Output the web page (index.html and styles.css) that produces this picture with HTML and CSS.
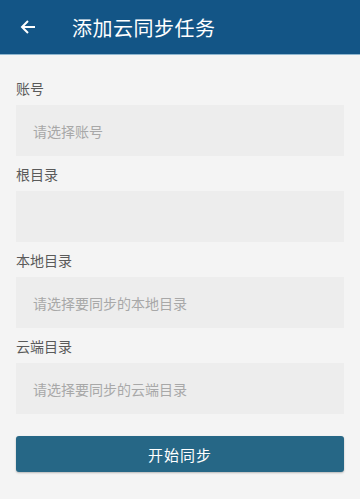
FILE: index.html
```html
<!DOCTYPE html>
<html lang="zh-CN">
<head>
    <meta charset="UTF-8">
    <meta name="viewport" content="width=device-width, initial-scale=1.0">
    <title>添加云同步任务</title>
    <link rel="stylesheet" href="styles.css">
</head>
<body>
    <div class="toolbar">
        <button class="back-btn">
            <svg width="16" height="16" viewBox="0 0 16 16">
                <path d="M15 8H2M8 2L2 8l6 6" fill="none" stroke="#fff" stroke-width="2"/>
            </svg>
        </button>
        <h1>添加云同步任务</h1>
    </div>

    <div class="form">
        <div class="field">
            <div class="label">账号</div>
            <div class="input">请选择账号</div>
        </div>
        <div class="field">
            <div class="label">根目录</div>
            <div class="input"></div>
        </div>
        <div class="field">
            <div class="label">本地目录</div>
            <div class="input">请选择要同步的本地目录</div>
        </div>
        <div class="field">
            <div class="label">云端目录</div>
            <div class="input">请选择要同步的云端目录</div>
        </div>

        <button class="btn">开始同步</button>
    </div>
</body>
</html>
```

FILE: styles.css
```css
* {
    margin: 0;
    padding: 0;
    box-sizing: border-box;
}

body {
    font-family: Roboto, "Noto Sans CJK SC", sans-serif;
    background-color: #f4f4f4;
    color: #555;
    width: 360px;
    height: 499px;
    overflow: hidden;
}

.toolbar {
    height: 55px;
    background-color: #135586;
    border-bottom: 1px solid #8fb6cf;
    display: flex;
    align-items: center;
    padding-left: 20px;
}

.back-btn {
    background: none;
    border: none;
    width: 16px;
    height: 16px;
    display: flex;
}

.toolbar h1 {
    color: #fff;
    font-size: 20px;
    font-weight: normal;
    margin-left: 36px;
    letter-spacing: 0.5px;
}

.form {
    padding: 24px 16px 0;
}

.field {
    margin-bottom: 9px;
}

.label {
    font-size: 14px;
    line-height: 20px;
    color: #5a5a5a;
    margin-bottom: 6px;
}

.input {
    height: 51px;
    background-color: #ededed;
    font-size: 14px;
    color: #a8a8a8;
    padding-left: 17px;
    display: flex;
    align-items: center;
}

.btn {
    display: block;
    width: 100%;
    height: 36px;
    margin-top: 22px;
    background-color: #266786;
    color: #fff;
    border: none;
    border-radius: 3px;
    font-family: inherit;
    font-size: 15px;
    letter-spacing: 1px;
    box-shadow: 0 1px 2px rgba(0,0,0,0.25);
}
```
